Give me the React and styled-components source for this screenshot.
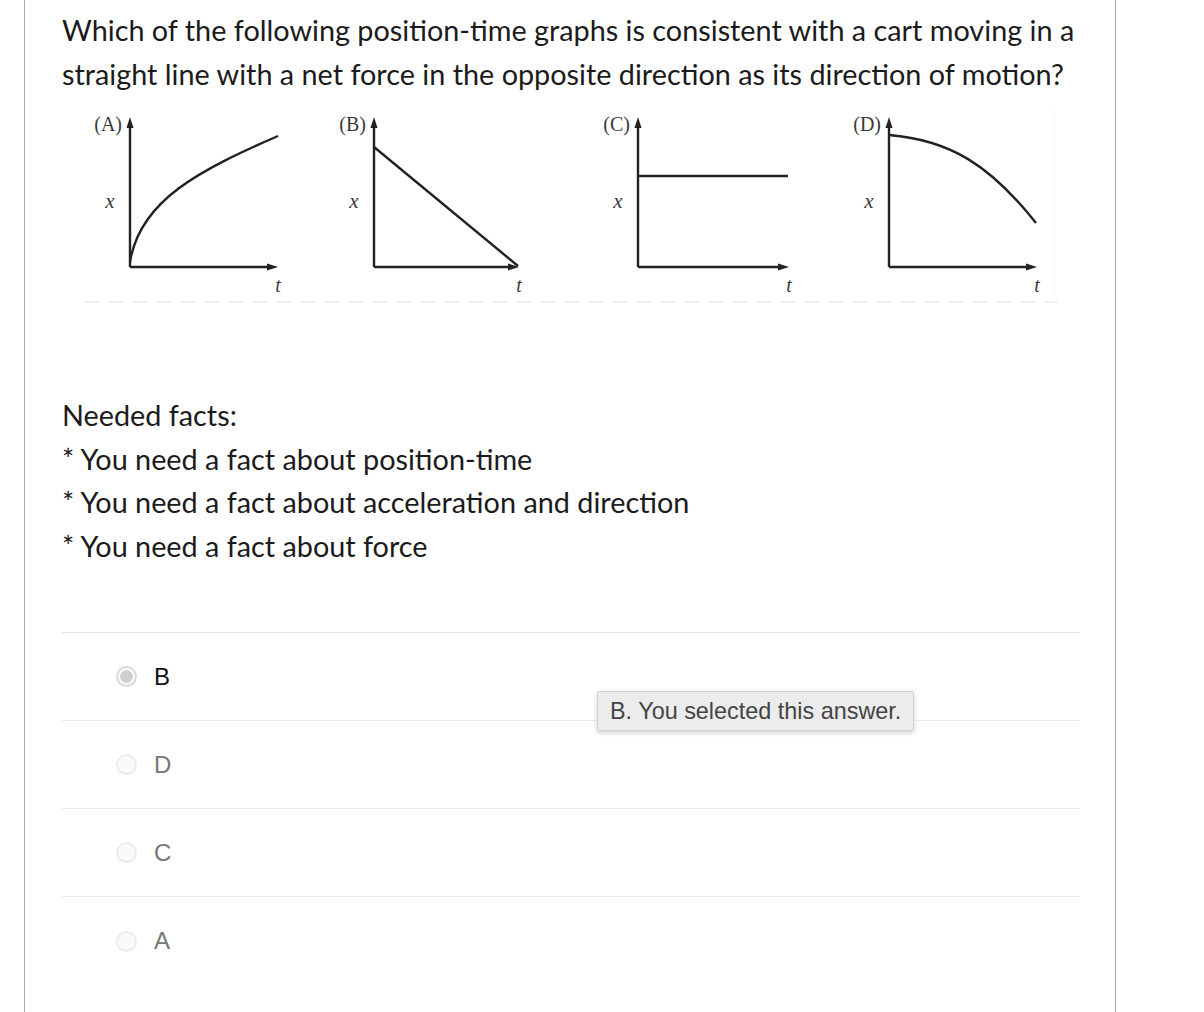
import React from "react";
import styled, { createGlobalStyle } from "styled-components";

const Global = createGlobalStyle`
  html, body { margin: 0; padding: 0; background: #fff; }
  body { font-family: Lato, "Noto Sans", sans-serif; color: #1b1b1b; }
`;

const Page = styled.div`
  margin-left: 24px;
  width: 1092px;
  min-height: 1012px;
  border-left: 1px solid #a9a9a9;
  border-right: 1px solid #a9a9a9;
  padding: 8px 20px 0 37px;
  box-sizing: border-box;
`;

const Question = styled.p`
  margin: 0;
  font-size: 28.8px;
  line-height: 44px;
`;

const Figure = styled.svg`
  display: block;
  margin-top: 4px;
  width: 1020px;
  height: 210px;
`;

const Facts = styled.div`
  margin-top: 84px;
  font-size: 28.8px;
  line-height: 43.5px;
`;

const Answers = styled.ul`
  list-style: none;
  margin: 64px 0 0;
  padding: 0;
  width: 1018px;
  border-top: 1px solid #e2e2e2;
`;

const Row = styled.li`
  position: relative;
  height: 88px;
  display: flex;
  align-items: center;
  padding-left: 54px;
  box-sizing: border-box;
  border-bottom: ${(p) => (p.$last ? "none" : "1px solid #ececec")};
`;

const Radio = styled.span`
  width: 21px;
  height: 21px;
  border-radius: 50%;
  box-sizing: border-box;
  border: 2px solid ${(p) => (p.$checked ? "#dcdcdc" : "#ececec")};
  background: ${(p) => (p.$checked ? "#cfcfcf" : "#fafafa")};
  box-shadow: ${(p) => (p.$checked ? "inset 0 0 0 2px #fff" : "none")};
  flex-shrink: 0;
`;

const Letter = styled.span`
  margin-left: 17px;
  font-family: "Liberation Sans", Arial, sans-serif;
  font-size: 24px;
  color: ${(p) => (p.$checked ? "#111" : "#777")};
`;

const Tip = styled.div`
  position: absolute;
  left: 535px;
  top: 58px;
  height: 38px;
  padding: 0 12px;
  display: flex;
  align-items: center;
  background: #ececec;
  border: 1px solid #d2d2d2;
  border-radius: 2px;
  box-shadow: 0 2px 5px rgba(0, 0, 0, 0.18);
  font-family: "Liberation Sans", Arial, sans-serif;
  font-size: 23.4px;
  color: #444;
  white-space: nowrap;
  z-index: 2;
`;

const Axes = ({ x0, xEnd }) => (
  <g stroke="#222" strokeWidth="2.4" fill="none">
    <line x1={x0} y1="267" x2={x0} y2="126" />
    <line x1={x0} y1="267" x2={xEnd - 8} y2="267" />
    <polygon points={`${x0 - 3.5},128 ${x0 + 3.5},128 ${x0},117`} fill="#222" stroke="none" />
    <polygon points={`${xEnd - 10},263.5 ${xEnd - 10},270.5 ${xEnd + 1},267`} fill="#222" stroke="none" />
  </g>
);

const Labels = ({ x0, xEnd, name }) => (
  <g fill="#3a3a3a" fontFamily="'Liberation Serif', 'DejaVu Serif', serif">
    <text x={x0 - 8} y="131" fontSize="20" textAnchor="end">({name})</text>
    <text x={x0 - 20} y="208" fontSize="21" fontStyle="italic" textAnchor="middle">x</text>
    <text x={xEnd + 1} y="292" fontSize="20" fontStyle="italic" textAnchor="middle">t</text>
  </g>
);

const graphs = [
  { name: "A", x0: 130, xEnd: 277, curve: "M130 262 C 140 200, 200 170, 278 136" },
  { name: "B", x0: 374, xEnd: 518, curve: "M374 147 L 518 266" },
  { name: "C", x0: 638, xEnd: 788, curve: "M638 176 L 788 176" },
  { name: "D", x0: 889, xEnd: 1036, curve: "M889 135 C 950 140, 990 165, 1036 223" },
];

const options = ["B", "D", "C", "A"];

export default function App() {
  return (
    <>
      <Global />
      <Page>
        <Question>
          Which of the following position-time graphs is consistent with a cart moving in a
          straight line with a net force in the opposite direction as its direction of motion?
        </Question>
        <Figure viewBox="62 100 1020 210">
          <line x1="85" y1="302" x2="1058" y2="302" stroke="#ececec" strokeWidth="1.5" strokeDasharray="14 10" />
          <line x1="1054" y1="110" x2="1054" y2="300" stroke="#f6f6f6" strokeWidth="1" />
          {graphs.map((g) => (
            <g key={g.name}>
              <Axes x0={g.x0} xEnd={g.xEnd} />
              <path d={g.curve} stroke="#222" strokeWidth="2.4" fill="none" />
              <Labels x0={g.x0} xEnd={g.xEnd} name={g.name} />
            </g>
          ))}
        </Figure>
        <Facts>
          <div>Needed facts:</div>
          <div>* You need a fact about position-time</div>
          <div>* You need a fact about acceleration and direction</div>
          <div>* You need a fact about force</div>
        </Facts>
        <Answers>
          {options.map((o, i) => (
            <Row key={o} $last={i === options.length - 1}>
              <Radio $checked={i === 0} />
              <Letter $checked={i === 0}>{o}</Letter>
              {i === 0 && <Tip>B. You selected this answer.</Tip>}
            </Row>
          ))}
        </Answers>
      </Page>
    </>
  );
}
